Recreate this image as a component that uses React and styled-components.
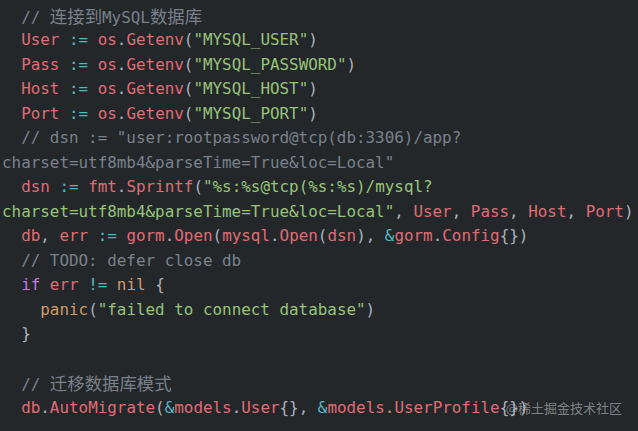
import React from "react";
import styled, { createGlobalStyle } from "styled-components";

const GlobalStyle = createGlobalStyle`
  html, body {
    margin: 0;
    padding: 0;
    background: #23272a;
    overflow: hidden;
  }
`;

const colors = {
  p: "#abb2bf", // punctuation / plain
  r: "#e06c75", // identifiers
  s: "#98c379", // strings
  c: "#7a818a", // comments
  o: "#56b6c2", // operators
  k: "#c678dd", // keywords
  n: "#d19a66", // nil / builtins
  f: "#61afef", // function names
};

const lines = [
  [["k", "func"], ["p", " "], ["f", "Init"], ["p", "() {"]],
  [["c", "  // "], ["cz", "连接到"], ["c", "MySQL"], ["cz", "数据库"]],
  [["p", "  "], ["r", "User"], ["p", " "], ["o", ":="], ["p", " "], ["r", "os"], ["p", "."], ["r", "Getenv"], ["p", "("], ["s", "\"MYSQL_USER\""], ["p", ")"]],
  [["p", "  "], ["r", "Pass"], ["p", " "], ["o", ":="], ["p", " "], ["r", "os"], ["p", "."], ["r", "Getenv"], ["p", "("], ["s", "\"MYSQL_PASSWORD\""], ["p", ")"]],
  [["p", "  "], ["r", "Host"], ["p", " "], ["o", ":="], ["p", " "], ["r", "os"], ["p", "."], ["r", "Getenv"], ["p", "("], ["s", "\"MYSQL_HOST\""], ["p", ")"]],
  [["p", "  "], ["r", "Port"], ["p", " "], ["o", ":="], ["p", " "], ["r", "os"], ["p", "."], ["r", "Getenv"], ["p", "("], ["s", "\"MYSQL_PORT\""], ["p", ")"]],
  [["c", "  // dsn := \"user:rootpassword@tcp(db:3306)/app?"]],
  [["c", "charset=utf8mb4&parseTime=True&loc=Local\""]],
  [["p", "  "], ["r", "dsn"], ["p", " "], ["o", ":="], ["p", " "], ["r", "fmt"], ["p", "."], ["r", "Sprintf"], ["p", "("], ["s", "\"%s:%s@tcp(%s:%s)/mysql?"]],
  [["s", "charset=utf8mb4&parseTime=True&loc=Local\""], ["p", ", "], ["r", "User"], ["p", ", "], ["r", "Pass"], ["p", ", "], ["r", "Host"], ["p", ", "], ["r", "Port"], ["p", ")"]],
  [["p", "  "], ["r", "db"], ["p", ", "], ["r", "err"], ["p", " "], ["o", ":="], ["p", " "], ["r", "gorm"], ["p", "."], ["r", "Open"], ["p", "("], ["r", "mysql"], ["p", "."], ["r", "Open"], ["p", "("], ["r", "dsn"], ["p", "), "], ["o", "&"], ["r", "gorm"], ["p", "."], ["r", "Config"], ["p", "{})"]],
  [["c", "  // TODO: defer close db"]],
  [["p", "  "], ["k", "if"], ["p", " "], ["r", "err"], ["p", " "], ["o", "!="], ["p", " "], ["n", "nil"], ["p", " {"]],
  [["p", "    "], ["n", "panic"], ["p", "("], ["s", "\"failed to connect database\""], ["p", ")"]],
  [["p", "  }"]],
  [["p", " "]],
  [["c", "  // "], ["cz", "迁移数据库模式"]],
  [["p", "  "], ["r", "db"], ["p", "."], ["r", "AutoMigrate"], ["p", "("], ["o", "&"], ["r", "models"], ["p", "."], ["r", "User"], ["p", "{}, "], ["o", "&"], ["r", "models"], ["n", "."], ["r", "UserProfile"], ["p", "{})"]],
  [["p", " "]],
];

export default function App() {
  return (
    <>
      <GlobalStyle />
      <Screen>
        <Code>
          {lines.map((line, i) => (
            <Line key={i}>
              {line.map(([k, text], j) => (
                <Token key={j} $k={k}>
                  {text}
                </Token>
              ))}
            </Line>
          ))}
        </Code>
        <Watermark>@稀土掘金技术社区</Watermark>
      </Screen>
    </>
  );
}

const Screen = styled.div`
  position: relative;
  width: 638px;
  height: 431px;
  overflow: hidden;
  background: #23272a;
`;

const Code = styled.div`
  display: flex;
  flex-direction: column;
  margin-top: -20.75px;
  padding-left: 2px;
  font-family: "DejaVu Sans Mono", "Noto Sans CJK SC", monospace;
  font-size: 15.9px;
`;

const Line = styled.div`
  height: 24.5px;
  line-height: 24.5px;
  white-space: pre;
`;

const Token = styled.span`
  color: ${(p) => (p.$k === "cz" ? colors.c : colors[p.$k])};
  font-family: ${(p) =>
    p.$k === "cz" ? `"Noto Sans CJK SC", sans-serif` : "inherit"};
  font-size: ${(p) => (p.$k === "cz" ? "17.4px" : "inherit")};
`;

const Watermark = styled.div`
  position: absolute;
  right: 16px;
  top: 399px;
  font-family: "Noto Sans CJK SC", "Noto Sans", sans-serif;
  font-size: 13px;
  line-height: 18px;
  color: rgba(210, 210, 210, 0.55);
`;
